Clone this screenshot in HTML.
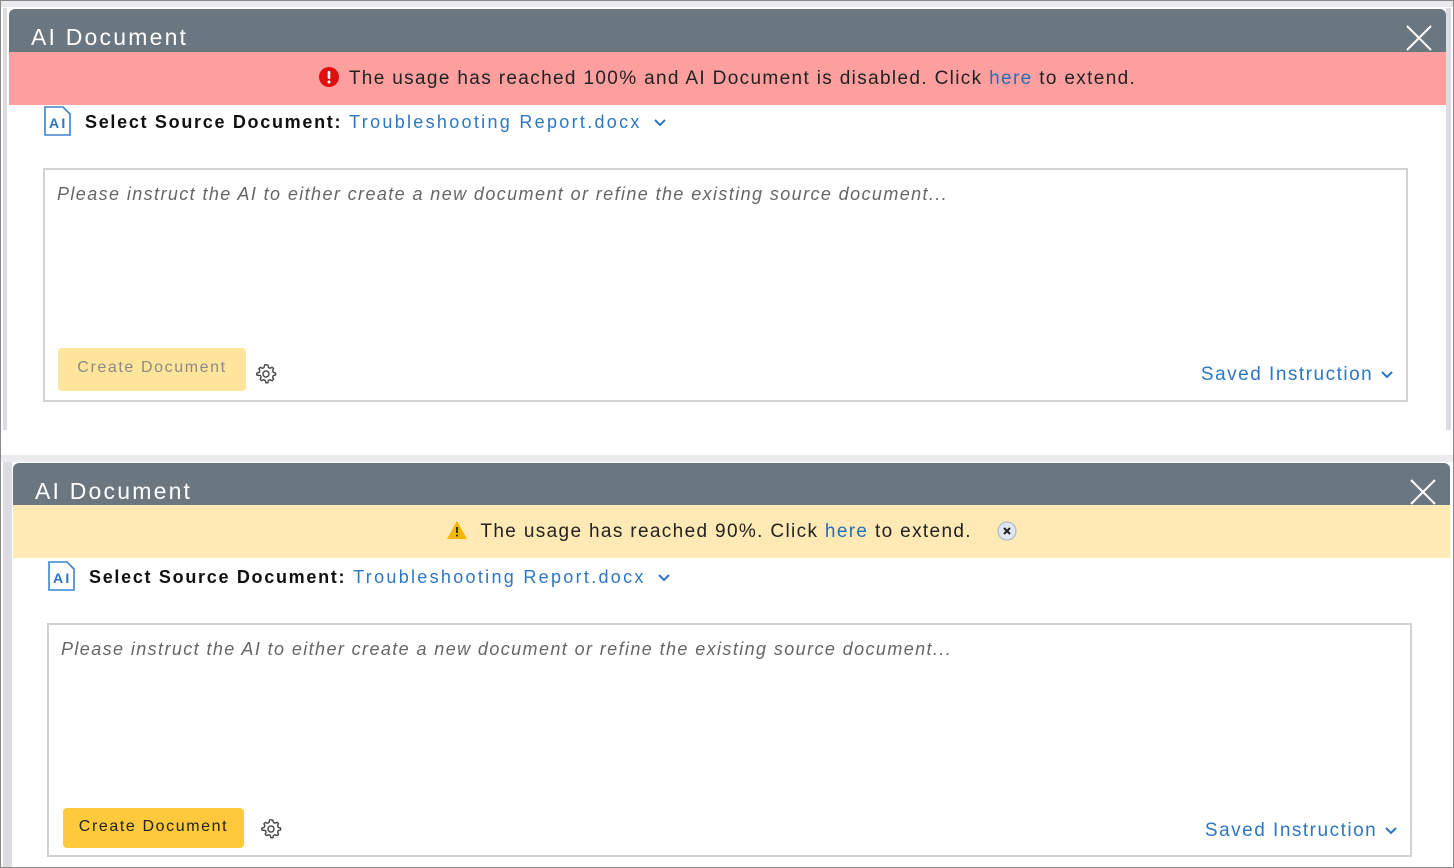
<!DOCTYPE html>
<html><head><style>
*{margin:0;padding:0;box-sizing:border-box}
body{width:1454px;height:868px;position:relative;background:#fff;font-family:"Liberation Sans",sans-serif;overflow:hidden}
.frame{position:absolute;left:0;top:0;width:1454px;height:868px;border:1px solid #8a8a8a}
.panel{position:absolute;background:#fff}
.hdr{position:absolute;left:0;right:0;top:0;height:44px;background:#6b7780;border-radius:6px 6px 0 0;color:#fff;font-size:23px;letter-spacing:2.2px;padding:15px 0 0 22px}
.x{position:absolute;right:14px;top:16px;width:26px;height:26px}
.ban{position:absolute;left:0;right:0;text-align:center;font-size:19px;letter-spacing:1.35px;color:#222}
.ban a{color:#2a6db5;text-decoration:none}
.sel{position:absolute;font-size:18px;color:#111;letter-spacing:2.3px}
.sel b{letter-spacing:1.7px}
.sel span{color:#2d76c2}
.ta{position:absolute;border:2px solid #d3d3d3;background:#fff}
.ph{position:absolute;left:12px;top:14px;font-style:italic;color:#666;font-size:18px;letter-spacing:1.4px}
.btn{position:absolute;border-radius:4px;font-size:16px;letter-spacing:1.6px;text-align:center}
.si{position:absolute;color:#2d76c2;font-size:19px;letter-spacing:1.5px}
.strip{position:absolute;background:#dcdde3}
</style></head><body>
<div class="strip" style="left:1px;top:1px;width:1452px;height:6px;background:#eaeaec"></div>
<div class="strip" style="left:3px;top:8px;width:4px;height:422px"></div>
<div class="strip" style="left:1446px;top:8px;width:5px;height:422px"></div>
<div class="strip" style="left:1px;top:455px;width:1452px;height:7px;background:#ececee"></div>
<div class="strip" style="left:3px;top:462px;width:9px;height:405px"></div>

<div class="panel" style="left:9px;top:9px;width:1437px;height:421px">
 <div class="hdr">AI Document
  <svg class="x" viewBox="0 0 26 26"><path d="M1 1L25 25M25 1L1 25" stroke="#fff" stroke-width="2"/></svg></div>
 <div class="ban" style="top:43px;height:53px;background:#fe9f9f;padding-top:15px">
  <svg width="20" height="20" viewBox="0 0 20 20" style="vertical-align:-3px;margin-right:10px"><circle cx="10" cy="10" r="10" fill="#e01010"/><rect x="8.7" y="4" width="2.6" height="8" rx="1" fill="#fff"/><circle cx="10" cy="15" r="1.5" fill="#fff"/></svg>The usage has reached 100% and AI Document is disabled. Click <a>here</a> to extend.</div>
 <div class="sel" style="left:34px;top:97px">
  <svg width="28" height="30" viewBox="0 0 28 30" style="vertical-align:-8px;margin-right:14px"><path d="M2 1H20L27 8V29H2Z" fill="#fff" stroke="#3a84d0" stroke-width="1.6"/><text x="6" y="22" font-family="Liberation Sans" font-weight="bold" font-size="14" fill="#2d76c2">AI</text></svg><b>Select Source Document:</b> <span>Troubleshooting Report.docx</span>
  <svg width="14" height="10" viewBox="0 0 14 10" style="margin-left:4px"><path d="M2 2L7 7L12 2" fill="none" stroke="#2d76c2" stroke-width="2"/></svg></div>
 <div class="ta" style="left:34px;top:159px;width:1365px;height:234px">
  <div class="ph">Please instruct the AI to either create a new document or refine the existing source document...</div>
  <div class="btn" style="left:13px;top:178px;width:188px;height:43px;background:#ffe49c;color:#8a8a8a;padding-top:11px">Create Document</div>
  <svg style="position:absolute;left:210px;top:193px" width="22" height="22" viewBox="0 0 24 24"><path d="M12 2l2 .3.6 2.5 1.7.9 2.4-1 1.5 1.4-1 2.4.8 1.7 2.5.7v2.1l-2.5.7-.8 1.7 1 2.4-1.5 1.4-2.4-1-1.7.9-.6 2.5h-2.1l-.6-2.5-1.7-.9-2.4 1-1.5-1.4 1-2.4-.8-1.7L2 13.1V11l2.5-.7.8-1.7-1-2.4 1.5-1.4 2.4 1 1.7-.9L10.5 2z" fill="none" stroke="#444" stroke-width="1.5" stroke-linejoin="round"/><circle cx="12" cy="12" r="3.3" fill="none" stroke="#444" stroke-width="1.5"/></svg>
  <div class="si" style="right:12px;top:194px">Saved Instruction <svg width="14" height="10" viewBox="0 0 14 10"><path d="M2 2L7 7L12 2" fill="none" stroke="#2d76c2" stroke-width="2"/></svg></div>
 </div>
</div>

<div class="panel" style="left:13px;top:463px;width:1437px;height:404px">
 <div class="hdr" style="height:43px">AI Document
  <svg class="x" viewBox="0 0 26 26"><path d="M1 1L25 25M25 1L1 25" stroke="#fff" stroke-width="2"/></svg></div>
 <div class="ban" style="top:42px;height:53px;background:#ffe9b4;padding-top:15px">
  <svg width="22" height="20" viewBox="0 0 22 20" style="vertical-align:-3px;margin-right:12px"><path d="M11 1L21 19H1Z" fill="#f7b500"/><rect x="10" y="7" width="2" height="6" fill="#333"/><circle cx="11" cy="15.5" r="1.1" fill="#333"/></svg>The usage has reached 90%. Click <a>here</a> to extend.
  <svg width="20" height="20" viewBox="0 0 20 20" style="vertical-align:-4px;margin-left:18px"><circle cx="10" cy="10" r="9" fill="#dfe8f2" stroke="#9db3c9"/><path d="M7 7L13 13M13 7L7 13" stroke="#222" stroke-width="2"/></svg></div>
 <div class="sel" style="left:34px;top:98px">
  <svg width="28" height="30" viewBox="0 0 28 30" style="vertical-align:-8px;margin-right:14px"><path d="M2 1H20L27 8V29H2Z" fill="#fff" stroke="#3a84d0" stroke-width="1.6"/><text x="6" y="22" font-family="Liberation Sans" font-weight="bold" font-size="14" fill="#2d76c2">AI</text></svg><b>Select Source Document:</b> <span>Troubleshooting Report.docx</span>
  <svg width="14" height="10" viewBox="0 0 14 10" style="margin-left:4px"><path d="M2 2L7 7L12 2" fill="none" stroke="#2d76c2" stroke-width="2"/></svg></div>
 <div class="ta" style="left:34px;top:160px;width:1365px;height:234px">
  <div class="ph">Please instruct the AI to either create a new document or refine the existing source document...</div>
  <div class="btn" style="left:14px;top:183px;width:181px;height:40px;background:#ffc93c;color:#222;padding-top:10px">Create Document</div>
  <svg style="position:absolute;left:211px;top:193px" width="22" height="22" viewBox="0 0 24 24"><path d="M12 2l2 .3.6 2.5 1.7.9 2.4-1 1.5 1.4-1 2.4.8 1.7 2.5.7v2.1l-2.5.7-.8 1.7 1 2.4-1.5 1.4-2.4-1-1.7.9-.6 2.5h-2.1l-.6-2.5-1.7-.9-2.4 1-1.5-1.4 1-2.4-.8-1.7L2 13.1V11l2.5-.7.8-1.7-1-2.4 1.5-1.4 2.4 1 1.7-.9L10.5 2z" fill="none" stroke="#444" stroke-width="1.5" stroke-linejoin="round"/><circle cx="12" cy="12" r="3.3" fill="none" stroke="#444" stroke-width="1.5"/></svg>
  <div class="si" style="right:12px;top:195px">Saved Instruction <svg width="14" height="10" viewBox="0 0 14 10"><path d="M2 2L7 7L12 2" fill="none" stroke="#2d76c2" stroke-width="2"/></svg></div>
 </div>
</div>
<div class="frame"></div>
</body></html>
